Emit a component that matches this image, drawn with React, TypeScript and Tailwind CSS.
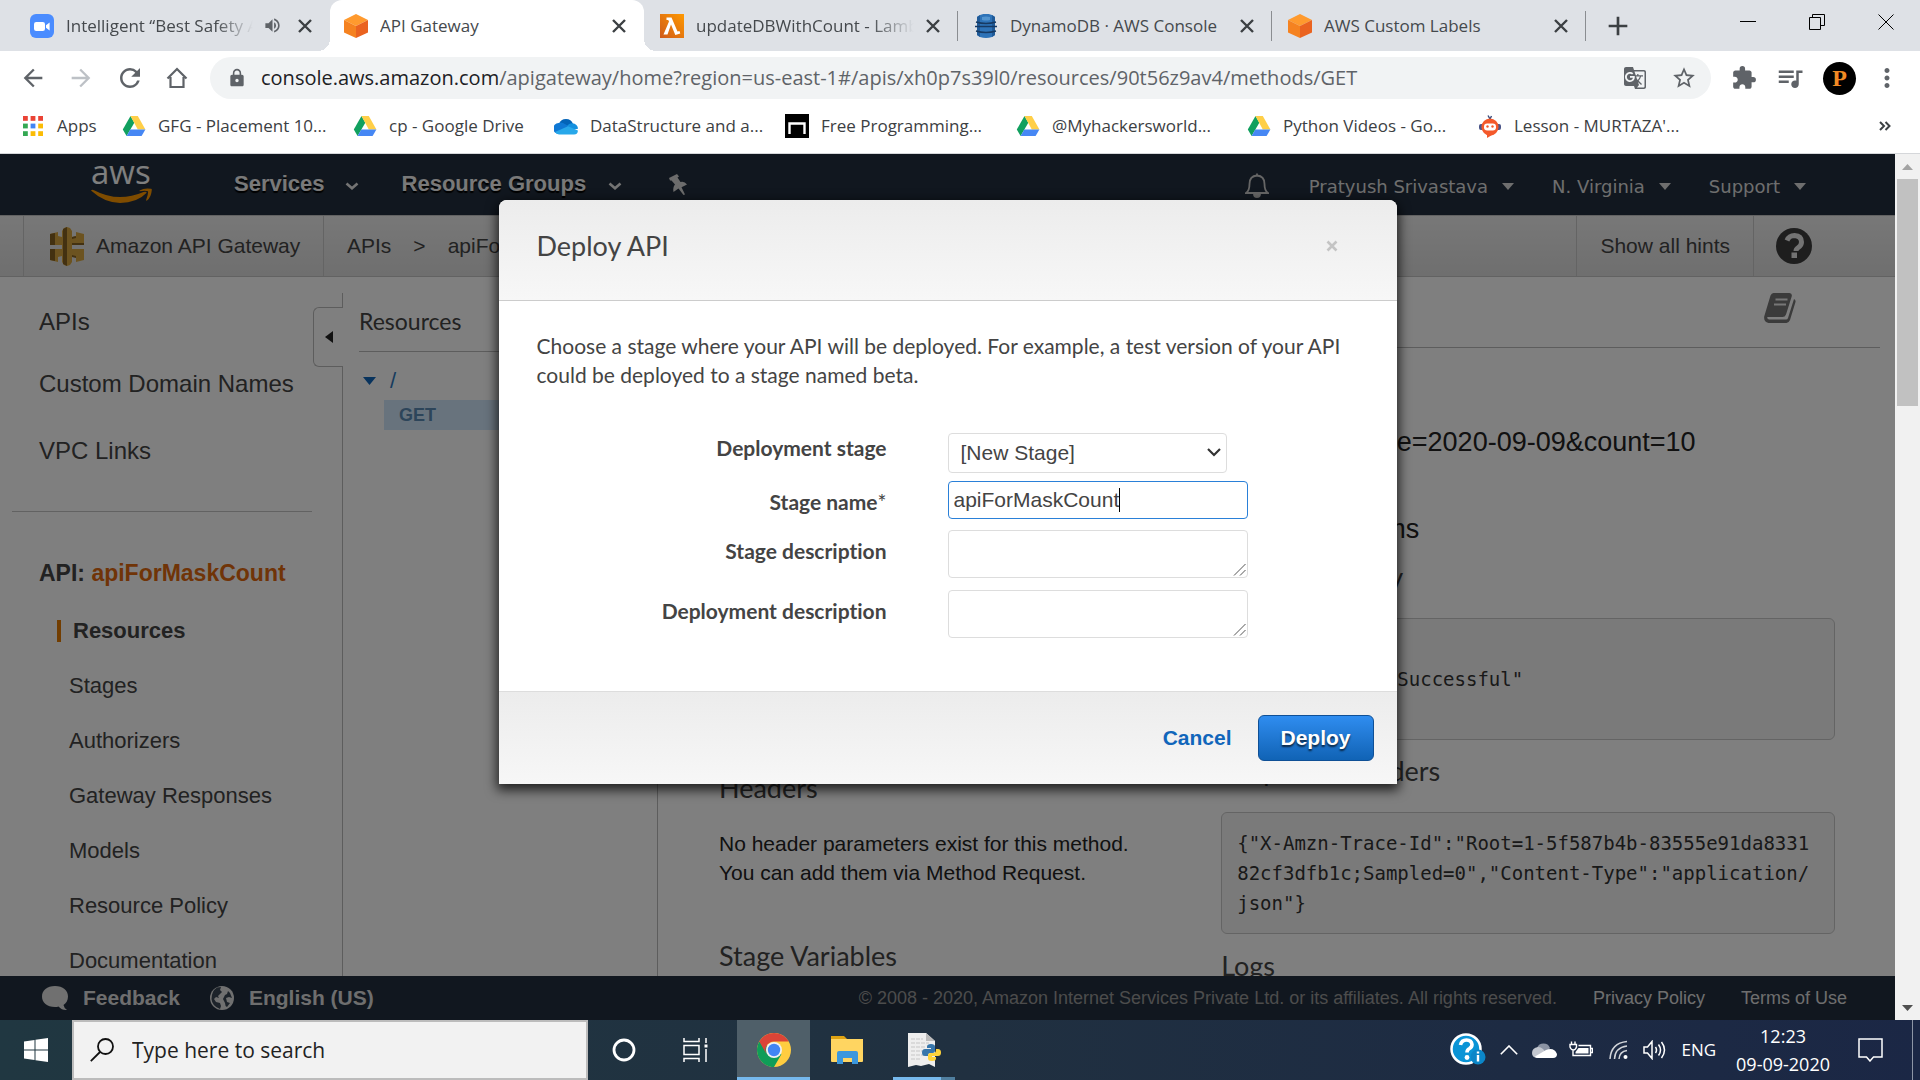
import React from "react";
import {
  MdAdd,
  MdArrowBack,
  MdArrowForward,
  MdExtension,
  MdGTranslate,
  MdLock,
  MdMoreVert,
  MdQueueMusic,
  MdRefresh,
  MdStarBorder,
  MdVolumeUp,
} from "react-icons/md";

const chromeFont = "font-['Open_Sans','Noto_Sans',sans-serif]";
const arial = "font-['Liberation_Sans',Arial,sans-serif]";
const lato = "font-['Lato',sans-serif] [font-variant-ligatures:none]";

/* ---------- favicons ---------- */

function ZoomIcon() {
  return (
    <svg viewBox="0 0 24 24" className="size-6 shrink-0">
      <rect width="24" height="24" rx="6" fill="#4a8cff" />
      <rect x="4" y="8" width="11" height="9" rx="2.2" fill="#fff" />
      <path d="M16 11.2 19.6 8.4v8.2L16 13.8z" fill="#fff" />
    </svg>
  );
}

function CubeIcon() {
  return (
    <svg viewBox="0 0 24 24" className="size-6 shrink-0">
      <path d="M12 0 24 6 12 12 0 6z" fill="#ff9a2e" />
      <path d="M0 6l12 6v12L0 18.500z" fill="#f58220" />
      <path d="M24 6l-12 6v12l12-5.500z" fill="#ea6320" />
    </svg>
  );
}

function LambdaIcon() {
  return (
    <svg viewBox="0 0 24 24" className="size-6 shrink-0">
      <defs>
        <linearGradient id="lam" x1="0" y1="1" x2="1" y2="0">
          <stop offset="0" stopColor="#cf5a1a" />
          <stop offset="1" stopColor="#f90" />
        </linearGradient>
      </defs>
      <rect width="24" height="24" fill="url(#lam)" />
      <path d="M6.500 3.500h5l6 14 2-.6.800 2.600-5 1.600L11 10.500 7.500 20.500H3.500L9 7.500 8.200 6H6.500z" fill="#fff" />
    </svg>
  );
}

function DynamoIcon() {
  return (
    <svg viewBox="0 0 24 24" className="size-6 shrink-0">
      <path d="M6 1Q12-1.500 18 1l3 2v18l-3 2q-6 2-12 0l-3-2V3z" fill="#2e73b8" />
      <path d="M3 3 6 1v22l-3-2zM21 3l-3-2v22l3-2z" fill="#205b99" />
      <path d="M2 8q10 3 20 0M1 12.500h22M2 17q10 3 20 0" stroke="#173a63" strokeWidth="1.400" fill="none" />
      <path d="M8 3q4-1.200 8 0v3q-4 1-8 0z" fill="#5294cf" />
    </svg>
  );
}

function DriveIcon() {
  return (
    <svg viewBox="0 0 24 24" className="size-6 shrink-0">
      <path d="M8.500 2 12.300 8.700 4.600 22 .800 15.500z" fill="#11a05f" />
      <path d="M8.500 2h7.300l7.600 13.500h-7.600z" fill="#ffcf48" />
      <path d="M8.300 15.500h15.100L19.600 22H4.600z" fill="#4687f4" />
    </svg>
  );
}

function OneDriveIcon() {
  return (
    <svg viewBox="0 0 24 24" className="size-6 shrink-0">
      <path d="M5 10a7.400 7.400 0 0 1 14 0L12 15z" fill="#0364b8" />
      <path d="M9 9 18 14 7 20H5A5.500 5.500 0 0 1 4.500 9 7 7 0 0 1 9 9z" fill="#0f78d4" />
      <path d="M18.500 9.300a5.500 5.500 0 0 1 5.500 5.500l-6 1-5-3.500a6 6 0 0 1 5.500-3z" fill="#1490df" />
      <path d="M1 18 14 12.300l9.900 4.200A4 4 0 0 1 20 20.500H5a5 5 0 0 1-4-2.500z" fill="#28a8ea" />
    </svg>
  );
}

function BlackSquareIcon() {
  return (
    <svg viewBox="0 0 24 24" className="size-6 shrink-0">
      <rect width="24" height="24" fill="#000" />
      <path d="M4.500 20V9.500h15V20" stroke="#fff" strokeWidth="2.400" fill="none" />
    </svg>
  );
}

function RobotIcon() {
  return (
    <svg viewBox="0 0 24 24" className="size-6 shrink-0">
      <path d="M10 1.500 12 5l1.500-3" stroke="#3b4a7a" strokeWidth="1.400" fill="none" />
      <rect x="1" y="10" width="22" height="6" rx="2" fill="#4a5588" />
      <circle cx="12" cy="13" r="8.600" fill="#f4592b" />
      <path d="M9 20v4l5-3z" fill="#f4592b" />
      <rect x="6" y="9.500" width="12" height="7" rx="3.200" fill="#fff" />
      <circle cx="9.500" cy="12.500" r="1.200" fill="#f4592b" />
      <circle cx="14.500" cy="12.500" r="1.200" fill="#f4592b" />
    </svg>
  );
}

function AppsIcon() {
  const colors = ["#ea4335", "#ea4335", "#ea4335", "#34a853", "#4285f4", "#fbbc05", "#34a853", "#fbbc05", "#fbbc05"];
  return (
    <svg viewBox="0 0 20 20" className="size-5 shrink-0">
      {colors.map((c, i) => (
        <rect key={i} x={(i % 3) * 7.6} y={Math.floor(i / 3) * 7.6} width="4.800" height="4.800" fill={c} />
      ))}
    </svg>
  );
}

/* ---------- browser chrome ---------- */

type TabData = { title: string; icon: React.ReactNode; active?: boolean; audio?: boolean; sep?: boolean };

const tabs: TabData[] = [
  { title: "Intelligent “Best Safety App", icon: <ZoomIcon />, audio: true },
  { title: "API Gateway", icon: <CubeIcon />, active: true },
  { title: "updateDBWithCount - Lambda", icon: <LambdaIcon />, sep: true },
  { title: "DynamoDB · AWS Console", icon: <DynamoIcon />, sep: true },
  { title: "AWS Custom Labels", icon: <CubeIcon />, sep: true },
];

function Tab({ tab }: { tab: TabData }) {
  return (
    <div
      className={
        tab.active
          ? "relative flex h-full w-[314px] items-center rounded-t-xl bg-white pr-3.5 pl-3.5 before:absolute before:bottom-0 before:-left-3 before:size-3 before:bg-[radial-gradient(circle_at_0_0,transparent_12px,white_12px)] after:absolute after:-right-3 after:bottom-0 after:size-3 after:bg-[radial-gradient(circle_at_100%_0,transparent_12px,white_12px)]"
          : tab.audio
            ? "relative flex h-full w-[314px] items-center pr-3.5 pl-3.5"
            : "relative flex h-full w-[314px] items-center pr-3.5 pl-4"
      }
    >
      {tab.icon}
      <button
        className={
          tab.active || tab.title.length < 24
            ? "ml-3 min-w-0 flex-1 overflow-hidden text-left text-[17px] leading-6 whitespace-nowrap text-[#45494d]"
            : "ml-3 min-w-0 flex-1 overflow-hidden [mask-image:linear-gradient(to_right,black_80%,transparent)] text-left text-[17px] leading-6 whitespace-nowrap text-[#45494d]"
        }
      >
        {tab.title}
      </button>
      {tab.audio && <MdVolumeUp className="mr-1 ml-2.5 size-[19px] shrink-0 text-[#5f6368]" />}
      <button aria-label={"Close " + tab.title} className="ml-2 shrink-0 text-[#3c4043]">
        <svg viewBox="0 0 22 22" className="size-[22px]" fill="none" stroke="currentColor" strokeWidth="2.400"><path d="M5 5l12 12M17 5 5 17" /></svg>
      </button>
      {tab.sep && <span className="absolute top-[11px] right-0 h-[30px] w-px bg-[#8a8d91]" />}
    </div>
  );
}

function TabStrip() {
  return (
    <div className="flex h-[51px] items-stretch bg-[#dee1e6] pl-4">
      {tabs.map((t) => (
        <Tab key={t.title} tab={t} />
      ))}
      <button aria-label="New tab" className="ml-4 text-[#3c4043]">
        <MdAdd className="size-8" />
      </button>
      <div className="ml-auto flex h-[43px] items-center gap-[53px] pr-[26px] text-black">
        <button aria-label="Minimize">
          <svg viewBox="0 0 16 16" className="size-4"><path d="M0 7.500h16" stroke="currentColor" strokeWidth="1" /></svg>
        </button>
        <button aria-label="Restore">
          <svg viewBox="0 0 16 16" className="size-4" fill="none" stroke="currentColor">
            <path d="M.5 3.500h11v12H.500zM3.500 3.500v-3h12v11h-4" />
          </svg>
        </button>
        <button aria-label="Close window">
          <svg viewBox="0 0 16 16" className="size-4" fill="none" stroke="currentColor"><path d="M.5.5l15 15M15.500.5l-15 15" /></svg>
        </button>
      </div>
    </div>
  );
}

function Toolbar() {
  return (
    <div className="flex h-[54px] items-center bg-white pr-[18px] pl-[19px] text-[#5f6368]">
      <div className="flex w-[191px] shrink-0 items-center gap-5">
        <button aria-label="Back"><MdArrowBack className="size-7" /></button>
        <button aria-label="Forward" className="text-[#bdc1c6]"><MdArrowForward className="size-7" /></button>
        <button aria-label="Reload"><MdRefresh className="size-[30px]" /></button>
        <button aria-label="Home">
          <svg viewBox="0 0 24 24" className="size-6" fill="none" stroke="currentColor" strokeWidth="2.200">
            <path d="M2.500 12.500 12 3l9.500 9.500M5.500 11v10h13V11" />
          </svg>
        </button>
      </div>
      <div className="flex h-[42px] min-w-0 flex-1 items-center rounded-full bg-[#f1f3f4] pr-3.5 pl-[17px]">
        <MdLock className="size-5 shrink-0" />
        <p className="ml-3.5 min-w-0 flex-1 overflow-hidden text-[20px] leading-7 whitespace-nowrap">
          <span className="text-[#202124]">console.aws.amazon.com</span>
          /apigateway/home?region=us-east-1#/apis/xh0p7s39l0/resources/90t56z9av4/methods/GET
        </p>
        <button aria-label="Translate"><MdGTranslate className="size-6" /></button>
        <button aria-label="Bookmark" className="ml-6"><MdStarBorder className="size-[26px]" /></button>
      </div>
      <div className="ml-5 flex items-center gap-[18px]">
        <button aria-label="Extensions"><MdExtension className="size-[26px]" /></button>
        <button aria-label="Media"><MdQueueMusic className="size-[30px]" /></button>
        <button aria-label="Profile" className="flex size-[33px] items-center justify-center rounded-full bg-black font-['Liberation_Serif',serif] text-2xl leading-none font-bold text-[#f08a24]">
          P
        </button>
        <button aria-label="Menu" className="-ml-0.5"><MdMoreVert className="size-[30px]" /></button>
      </div>
    </div>
  );
}

const bookmarks = [
  { label: "GFG - Placement 10...", icon: <DriveIcon />, narrow: false },
  { label: "cp - Google Drive", icon: <DriveIcon />, narrow: true },
  { label: "DataStructure and a...", icon: <OneDriveIcon />, narrow: false },
  { label: "Free Programming...", icon: <BlackSquareIcon />, narrow: false },
  { label: "@Myhackersworld...", icon: <DriveIcon />, narrow: false },
  { label: "Python Videos - Go...", icon: <DriveIcon />, narrow: false },
  { label: "Lesson - MURTAZA'...", icon: <RobotIcon />, narrow: false },
];

function BookmarksBar() {
  return (
    <nav className="flex h-[49px] items-center border-b border-[#d5d7da] bg-white pb-1.5 pl-[23px] text-[17px] leading-6 whitespace-nowrap text-[#3c4043]">
      <a href="#apps" className="flex w-[99px] items-center gap-3.5"><AppsIcon />Apps</a>
      {bookmarks.map((b) => (
        <a key={b.label} href="#bookmark" className={b.narrow ? "flex w-[201px] items-center gap-3" : "flex w-[231px] items-center gap-3"}>
          {b.icon}
          {b.label}
        </a>
      ))}
      <button aria-label="More bookmarks" className="ml-auto pr-[29px]">
        <svg viewBox="0 0 12 12" className="size-3" fill="none" stroke="#3c4043" strokeWidth="2"><path d="M1 2l4 4-4 4M6.500 2l4 4-4 4" /></svg>
      </button>
    </nav>
  );
}

/* ---------- AWS console ---------- */

function Chevron() {
  return (
    <svg viewBox="0 0 14 8" className="h-2 w-3.5" fill="none" stroke="#e8e8e8" strokeWidth="2.600"><path d="M1.500 1.500 7 6.200l5.500-4.700" /></svg>
  );
}

function Caret() {
  return <svg viewBox="0 0 12 7" className="h-[7px] w-3" fill="#ddd"><path d="M0 0h12L6 7z" /></svg>;
}

function AwsNav() {
  return (
    <header className="flex h-[61px] shrink-0 items-start bg-[#232f3e] pl-[91px] text-white">
      <a href="#home" className="flex w-[143px] flex-col pt-2">
        <span className="-mt-1.5 font-['Open_Sans','Noto_Sans',sans-serif] text-[33px] leading-8">aws</span>
        <svg viewBox="0 0 61 16" className="h-4 w-[61px]" fill="#f90">
          <path d="M0 2.500q1-1.500 3-.2Q27 15 52.500 4q2.800-1 3.200.800Q46 15 29 15 13 14.500 0 2.500z" />
          <path d="M48.500 2.500Q54-.500 60 .800 61 1 60.800 2q-.5 7-4.800 10.500-1.200.5-.8-.8Q57.500 6 57 3.200q-3-.8-8.300.1z" />
        </svg>
      </a>
      <button className={`${arial} flex h-[58px] items-center gap-5 text-[22px] font-bold text-[#f2f2f2] [text-shadow:0_2px_1px_#000]`}>
        Services <span className="pt-1.5"><Chevron /></span>
      </button>
      <button className={`${arial} ml-[43px] flex h-[58px] items-center gap-[22px] text-[22px] font-bold text-[#f2f2f2] [text-shadow:0_2px_1px_#000]`}>
        Resource Groups <span className="pt-1.5"><Chevron /></span>
      </button>
      <button aria-label="Pin" className="ml-[46px] pt-[19px]">
        <svg viewBox="0 0 20 22" className="h-[22px] w-5" fill="#d8d8d8">
          <path d="M1 5 9 1l2 2.500-1.500 1L12.500 9q4-1 6.500 2.500l-5.500 2.700 3.500 7.300-1.500.5-5-6.500-5 3.500Q4.500 14.500 7 11.500L3.500 7.500 2 7.500z" />
        </svg>
      </button>
      <div className="ml-auto flex h-16 items-center pr-[89px] font-['DejaVu_Sans',Verdana,sans-serif] text-[18px] text-[#ddd] [text-shadow:0_2px_1px_#000]">
        <button aria-label="Notifications" className="mr-10 -mt-0.5">
          <svg viewBox="0 0 24 26" className="h-[26px] w-6" fill="none" stroke="#ccc" strokeWidth="1.800">
            <path d="M12 1.500v2M1 21h22q-3.500-2-3.500-9 0-8-7.500-8.500Q4.500 4 4.500 12q0 7-3.500 9z" />
            <path d="M9 22a3 3 0 0 0 6 0z" fill="#ccc" />
          </svg>
        </button>
        <button className="flex items-center gap-3.5">Pratyush Srivastava <Caret /></button>
        <button className="ml-[38px] flex items-center gap-3.5">N. Virginia <Caret /></button>
        <button className="ml-[38px] flex items-center gap-3.5">Support <Caret /></button>
      </div>
    </header>
  );
}

function GatewayIcon() {
  return (
    <svg viewBox="0 0 34 39" className="h-[39px] w-[34px]">
      <path d="M0 7l8-2v4l4 1V4l2-3 3-1 3 1 2 3v6l4-1V5l8 2v11H22v4h12v11l-8 2v-5l-4-1v6l-2 3-3 1-3-1-2-3v-6l-4 1v5l-8-2V22h12v-4H0z" fill="#d9a741" />
      <path d="M17 0l-4 2v35l4 2zM0 7l5-1v12H0zM0 22h5v12l-5-1zM26 5v6l-4 1v-2l4-1zM22 16h12v2H22zM26 35v-6l-4-1v2l4 1z" fill="#876223" />
    </svg>
  );
}

function Breadcrumbs() {
  return (
    <div className={`${arial} flex h-[62px] shrink-0 items-stretch border-y border-[#c4c4c4] bg-linear-to-b from-[#f0f0f0] to-[#dedede] pl-[23px] text-[21px] text-[#444]`}>
      <a href="#gateway" className="flex w-[301px] items-center gap-3 border-x border-[#c8c8c8] pl-[26px]">
        <GatewayIcon />
        Amazon API Gateway
      </a>
      <nav className="flex items-center gap-[22px] pl-[23px]">
        <a href="#apis">APIs</a>
        <span>&gt;</span>
        <a href="#api">apiForMaskCount</a>
      </nav>
      <div className="ml-auto flex items-stretch">
        <button className="border-x border-[#c8c8c8] px-[23px]">Show all hints</button>
        <button aria-label="Help" className="pr-[83px] pl-[22px]">
          <svg viewBox="0 0 36 36" className="size-9">
            <circle cx="18" cy="18" r="18" fill="#3c3c3c" />
            <path d="M11 12.500Q13 7.500 18.500 7.500q7 .5 7 6.500 0 3.500-3.200 5.500-2.300 1.500-2.300 3.500" fill="none" stroke="#e6e6e6" strokeWidth="5" />
            <rect x="15.500" y="24.500" width="5.500" height="5.500" fill="#e6e6e6" />
          </svg>
        </button>
      </div>
    </div>
  );
}

const apiLinks = ["Stages", "Authorizers", "Gateway Responses", "Models", "Resource Policy", "Documentation"];

function Sidebar() {
  return (
    <aside className={`${arial} flex w-[343px] shrink-0 text-[#444]`}>
      <div className="min-w-0 flex-1 pl-3">
        <ul className="pl-[27px] text-[24px] leading-[30px] whitespace-nowrap">
          <li className="pt-[30px]"><a href="#apis">APIs</a></li>
          <li className="pt-8"><a href="#domains">Custom Domain Names</a></li>
          <li className="pt-[37px]"><a href="#vpc">VPC Links</a></li>
        </ul>
        <hr className="mt-[45px] mr-px border-[#c4c4c4]" />
        <h2 className="mt-[46px] pl-[27px] text-[23px] leading-[30px] font-bold whitespace-nowrap">
          API: <a href="#api" className="text-[#e0680f]">apiForMaskCount</a>
        </h2>
        <ul className="pt-[15px] text-[22px] leading-[55px] whitespace-nowrap">
          <li className="flex items-center pl-[45px] font-bold">
            <span className="mr-3 h-[22px] w-1 bg-[#e57a00]" />
            <a href="#resources">Resources</a>
          </li>
          {apiLinks.map((l) => (
            <li key={l} className="pl-[57px]"><a href="#section">{l}</a></li>
          ))}
        </ul>
      </div>
      <div className="flex w-[30px] flex-col pt-4">
        <div className="h-3.5 border-r border-[#bbb]" />
        <button aria-label="Collapse sidebar" className="flex h-[60px] items-center rounded-l-md border border-r-0 border-[#bbb] pl-[11px]">
          <svg viewBox="0 0 8 12" className="h-3 w-2" fill="#222"><path d="M8 0v12L0 6z" /></svg>
        </button>
        <div className="flex-1 border-r border-[#bbb]" />
      </div>
    </aside>
  );
}

function ResourceTree() {
  return (
    <section className="w-[315px] shrink-0 border-r border-[#bbb] pl-4">
      <h2 className={`${lato} mr-4 h-[75px] border-b border-[#bbb] pt-[31px] text-[23px] leading-[27px] text-[#444]`}>Resources</h2>
      <div className={`${arial} pt-[14px]`}>
        <button className="flex items-center gap-3.5 pl-1 text-[22px] leading-[30px] text-[#2f78bd]">
          <svg viewBox="0 0 13 8" className="h-2 w-[13px]" fill="#1166bb"><path d="M0 0h13L6.500 8z" /></svg>
          /
        </button>
        <button className="mt-1 ml-[25px] block h-[30px] w-[257px] bg-[#d1e6fa] pl-[15px] text-left text-[18px] font-bold text-[#5a8ab4]">GET</button>
      </div>
    </section>
  );
}

function BookIcon() {
  return (
    <svg viewBox="0 0 32 30" className="h-[30px] w-8">
      <path d="M9.500 0h16q3 .5 2.200 3.500L22 21.500q-1 2.500-3.500 2.500H3.500q-1 1.500 1.500 2.500h17q1.500 0 2-1.500L30 6q2 1 1.500 3l-5.500 18q-1 2.500-3.500 3H4.500Q-.5 29 .2 23.500L6.500 2.500Q7.500 0 9.500 0z" fill="#777" />
      <path d="M11.500 6.500h12M10 11.500h12" stroke="#eee" strokeWidth="2" />
    </svg>
  );
}

const leftSections = [
  { title: "Headers", lines: ["No header parameters exist for this method.", "You can add them via Method Request."] },
  { title: "Stage Variables", lines: [] },
];

const headingClass = "font-['Lato',sans-serif] text-[27px] leading-[34px] text-[#444]";
const codeClass =
  "rounded-md border border-[#c8c8c8] bg-[#f5f5f5] p-[15px] font-['DejaVu_Sans_Mono',monospace] text-[19px] leading-[30px] break-all whitespace-pre-wrap text-[#333]";

function MethodTest() {
  return (
    <main className={`${arial} min-w-0 flex-1`}>
      <div className="mr-[15px] ml-[15px] flex h-[71px] justify-end border-b border-[#bbb] pt-4 pr-[84px]">
        <a href="#docs" aria-label="Documentation"><BookIcon /></a>
      </div>
      <div className="grid grid-cols-[9fr_11fr] pr-[60px] pl-[61px]">
        <div className="pt-[423px]">
          {leftSections.map((s) => (
            <section key={s.title} className="pb-[52px]">
              <h3 className={headingClass}>{s.title}</h3>
              <p className="pt-6 text-[21px] leading-[29px] text-[#222]">
                {s.lines.map((l) => (
                  <span key={l} className="block">{l}</span>
                ))}
              </p>
            </section>
          ))}
        </div>
        <div className="pt-[73px]">
          <div className="text-[27px] leading-[42px] whitespace-nowrap text-[#222]">
            <p>Request: /?date=2020-09-09&amp;count=10</p>
            <p className="pt-[45px]">Latency: 342 ms</p>
          </div>
          <h3 className={`${headingClass} pt-2.5 pb-6`}>Response Body</h3>
          <pre className={codeClass}>{'{\n"Update count Successful"\n}'}</pre>
          <h3 className={`${headingClass} pt-3.5 pb-6`}>Response Headers</h3>
          <pre className={codeClass}>{'{"X-Amzn-Trace-Id":"Root=1-5f587b4b-83555e91da833182cf3dfb1c;Sampled=0","Content-Type":"application/json"}'}</pre>
          <h3 className={`${headingClass} pt-[15px] pb-6`}>Logs</h3>
        </div>
      </div>
    </main>
  );
}

function AwsFooter() {
  return (
    <footer className={`${arial} flex h-11 shrink-0 items-center bg-[#232f3e] pr-12 pl-[41px] whitespace-nowrap`}>
      <button className="flex items-center gap-3.5 text-[21px] font-bold text-[#ddd]">
        <svg viewBox="0 0 28 26" className="h-[26px] w-7" fill="#e0e0e0">
          <path d="M14 1c8 0 13 4.500 13 10.500 0 4-2 7-4.500 8.500q.5 3 3.500 5-5 .5-8.500-3.500-1.500.5-3.500.5C6 22 1 17.500 1 11.500S6 1 14 1z" />
        </svg>
        Feedback
      </button>
      <button className="ml-[29px] flex items-center gap-3.5 text-[21px] font-bold text-[#ddd]">
        <svg viewBox="0 0 26 26" className="size-[26px]">
          <circle cx="13" cy="13" r="12" fill="#e0e0e0" />
          <path d="M8 2.500 12 2l-1 3 2 2-4 4 1 2-3-1-2 2 2 3 4 1 1 3-1 3Q3 21 2.500 14 2.500 6 8 2.500zM19 6l2 2 2 5-3-1-3 1 1 4 3 1-3 4q-2-1-2-4l-2-4 2-4 2-1z" fill="#3a4654" />
        </svg>
        English (US)
      </button>
      <div className="ml-auto flex items-center gap-9 text-[18px] text-[#ddd]">
        <p className="text-[#999]">© 2008 - 2020, Amazon Internet Services Private Ltd. or its affiliates. All rights reserved.</p>
        <a href="#privacy">Privacy Policy</a>
        <a href="#terms">Terms of Use</a>
      </div>
    </footer>
  );
}

/* ---------- deploy dialog ---------- */

const labelClass = "w-[350px] shrink-0 text-right text-[21px] leading-[29px] font-bold text-[#444]";

function DescriptionField({ id, label }: { id: string; label: string }) {
  return (
    <div className="flex h-[60px] gap-[61px]">
      <label htmlFor={id} className={`${labelClass} pt-1.5`}>{label}</label>
      <div className="relative h-12 w-[300px]">
        <textarea id={id} className="size-full resize-none rounded border border-[#ddd]" />
        <svg viewBox="0 0 13 13" className="pointer-events-none absolute right-0.5 bottom-0.5 size-[13px]" fill="none" stroke="#555">
          <path d="M1 12.500 12.500 1M7 12.500 12.500 7" />
        </svg>
      </div>
    </div>
  );
}

function DeployDialog() {
  return (
    <div className="absolute inset-0 flex items-start justify-center bg-black/50 pt-[46px]">
      <div role="dialog" aria-labelledby="deploy-title" className={`${lato} w-[898px] rounded-t-lg bg-white text-[#444] shadow-[0_4px_12px_2px_rgba(0,0,0,0.75)]`}>
        <div className="flex h-[101px] items-center justify-between rounded-t-lg border-b border-[#ccc] bg-linear-to-b from-[#ececec] to-[#f7f7f7] pr-[59px] pb-2 pl-[38px]">
          <h1 id="deploy-title" className="text-[27px] leading-8">Deploy API</h1>
          <button aria-label="Close" className="text-[#c4c4c4]">
            <svg viewBox="0 0 12 12" className="size-3" stroke="currentColor" strokeWidth="2.600"><path d="M1.500 1.500l9 9M10.500 1.500l-9 9" /></svg>
          </button>
        </div>
        <div className="pt-[30px] pb-[41px]">
          <p className="pr-10 pl-[38px] text-[21px] leading-[29px]">
            Choose a stage where your API will be deployed. For example, a test version of your API could be deployed to a stage named beta.
          </p>
          <form className="mt-[44px] flex flex-col pl-[38px]">
            <div className="flex h-12 gap-[61px]">
              <label htmlFor="stage" className={labelClass}>Deployment stage</label>
              <div className="relative h-10 w-[279px]">
                <select id="stage" className={`${arial} size-full appearance-none rounded border border-[#ddd] bg-white pl-3 text-[21px] text-[#444]`}>
                  <option>[New Stage]</option>
                </select>
                <svg viewBox="0 0 14 9" className="pointer-events-none absolute top-[15px] right-1.5 h-[9px] w-3.5" fill="none" stroke="#333" strokeWidth="2.200"><path d="M1 1l6 6 6-6" /></svg>
              </div>
            </div>
            <div className="flex h-[49px] gap-[61px]">
              <label htmlFor="name" className={`${labelClass} pt-1.5`}>Stage name<span className="font-normal">*</span></label>
              <div className="flex h-[38px] w-[300px] items-center rounded border border-[#2a80d8] bg-white pl-[5px]">
                <input id="name" defaultValue="apiForMaskCount" className={`${arial} [field-sizing:content] text-[21px] text-[#444] outline-none`} />
                <span className="h-6 w-px bg-black" />
              </div>
            </div>
            <DescriptionField id="sdesc" label="Stage description" />
            <DescriptionField id="ddesc" label="Deployment description" />
          </form>
        </div>
        <div className={`${arial} flex h-[93px] items-center justify-end gap-[26px] border-t border-[#ddd] bg-linear-to-b from-[#ececec] to-[#f7f7f7] pr-[23px] text-[21px] font-bold`}>
          <button className="text-[#1166bb]">Cancel</button>
          <button className="h-[46px] w-[116px] rounded-md border border-[#0f5096] bg-linear-to-b from-[#2f8df0] to-[#1063b5] text-white [text-shadow:0_2px_2px_rgba(0,0,0,0.7)]">Deploy</button>
        </div>
      </div>
    </div>
  );
}

function Scrollbar() {
  return (
    <div className="flex w-[25px] shrink-0 flex-col items-center bg-[#f1f1f1]">
      <svg viewBox="0 0 11 6" className="mt-2.5 h-1.5 w-[11px]" fill="#a3a3a3"><path d="M0 6h11L5.500 0z" /></svg>
      <div className="mt-[9px] h-[227px] w-[21px] bg-[#c1c1c1]" />
      <svg viewBox="0 0 11 6" className="mt-auto mb-[9px] h-1.5 w-[11px]" fill="#505050"><path d="M0 0h11L5.500 6z" /></svg>
    </div>
  );
}

/* ---------- taskbar ---------- */

function ChromeLogo() {
  return (
    <svg viewBox="0 0 34 34" className="size-[34px]">
      <circle cx="17" cy="17" r="17" fill="#ffcd40" />
      <path d="M17 17 2.300 8.500A17 17 0 0 0 17 34l7.400-12.800z" fill="#0f9d58" />
      <path d="M2.300 8.500A17 17 0 0 1 31.700 8.500H17a8.500 8.500 0 0 0-7.400 12.700z" fill="#db4437" />
      <circle cx="17" cy="17" r="8" fill="#f1f1f1" />
      <circle cx="17" cy="17" r="6.200" fill="#4285f4" />
    </svg>
  );
}

function Taskbar() {
  return (
    <div className="flex h-[60px] shrink-0 items-stretch bg-linear-to-r from-[#203741] via-[#203040] to-[#1b2745] text-white">
      <button aria-label="Start" className="flex w-[72px] items-center justify-center">
        <svg viewBox="0 0 24 24" className="size-6" fill="#fff"><path d="M0 3.500 10.500 2v9.500H0zM11.500 1.800 24 0v11.500H11.500zM0 12.500h10.500V22L0 20.500zM11.500 12.500H24V24l-12.500-1.800z" /></svg>
      </button>
      <label className="flex w-[516px] items-center gap-[18px] border-2 border-[#bcbcbc] bg-[#f2f2f2] pt-0.5 pl-4">
        <svg viewBox="0 0 24 24" className="-mt-0.5 size-6" fill="none" stroke="#111" strokeWidth="1.800"><circle cx="15.500" cy="8.500" r="7.500" /><path d="M10 14 .8 23.200" /></svg>
        <input aria-label="Search" placeholder="Type here to search" className="min-w-0 flex-1 bg-transparent text-[21px] text-black outline-none placeholder:text-[#222]" />
      </label>
      <button aria-label="Cortana" className="flex w-[72px] items-center justify-center">
        <svg viewBox="0 0 24 24" className="size-6" fill="none" stroke="#fff" strokeWidth="2.800"><circle cx="12" cy="12" r="10" /></svg>
      </button>
      <button aria-label="Task view" className="flex w-[77px] items-center pl-[23px]">
        <svg viewBox="0 0 26 24" className="h-6 w-[26px]" fill="none" stroke="#fff" strokeWidth="1.500"><path d="M1 0v3.500h15V0M1 24v-3.500h15V24M1 7.500h15v9H1zM23 0v5M23 11v13" /><path d="M21.500 6.500h3v3h-3z" fill="#fff" stroke="none" /></svg>
      </button>
      <button aria-label="Chrome" className="flex w-[73px] items-center justify-center border-b-[3px] border-[#76b9ed] bg-[#4f5f69] pt-[3px]"><ChromeLogo /></button>
      <button aria-label="File Explorer" className="flex w-[83px] items-center pl-[21px]">
        <svg viewBox="0 0 33 28" className="h-7 w-[33px]">
          <path d="M0 0h13l3 3v4H0z" fill="#dfa312" />
          <path d="M0 3h32v22q0 1-1 1H1q-1 0-1-1z" fill="#ffd561" />
          <path d="M6 28V17q0-2 2-2h17q2 0 2 2v11h-6v-6H12v6z" fill="#3b97dd" />
        </svg>
      </button>
      <button aria-label="Python" className="flex w-12 items-center border-b-[3px] border-[#76b9ed] pt-[3px] pl-3.5">
        <svg viewBox="0 0 34 34" className="size-[34px] shrink-0">
          <path d="M1 0h18l9 8v26l-6-3-8 2-5-1-8 2z" fill="#eee" />
          <path d="M19 0v8h9z" fill="#bbb" />
          <path d="M4 6h12M4 10h18M4 14h14M4 18h12M4 22h13M4 26h10" stroke="#c5c5c5" strokeWidth="1.200" strokeDasharray="4 1" />
          <path d="M21 23h-3q-3 0-3-3.500t3-3.500h6v-1h-4v-1.500q0-2.500 4-2.500t4 2.500v4q0 2.500-2.500 2.500h-2q-2.500 0-2.500 3z" fill="#3776ab" />
          <path d="M29 16h2q3 0 3 3.500T31 23h-6v1h4v1.500q0 2.500-4 2.500t-4-2.500v-3q0-2.500 2.500-2.500h3q2.500 0 2.500-3z" fill="#ffd43b" />
        </svg>
      </button>
      <span className="w-3.5 border-b-[3px] border-[#507f9f]" />
      <div className="ml-auto flex items-center">
        <button aria-label="Help" className="mr-3.5">
          <svg viewBox="0 0 36 34" className="h-[34px] w-9">
            <circle cx="16" cy="16" r="14.500" fill="#0a94d6" stroke="#fff" strokeWidth="2.500" />
            <path d="M10.500 12q1-5 6-5t5.500 4.500q0 2.500-2.500 4-2.500 1.300-2.500 4" fill="none" stroke="#fff" strokeWidth="3.600" />
            <circle cx="17" cy="24.500" r="2.400" fill="#fff" />
            <circle cx="28" cy="24" r="7.500" fill="#0b86c8" />
            <path d="M28 22v6.500M28 18.500v2" stroke="#fff" strokeWidth="2.400" />
          </svg>
        </button>
        <svg viewBox="0 0 18 10" className="mr-3.5 h-2.5 w-[18px]" fill="none" stroke="#fff" strokeWidth="1.600"><path d="M.8 9.200 9 1l8.200 8.200" /></svg>
        <svg viewBox="0 0 25 16" className="mr-3 h-4 w-[25px]">
          <path d="M5 6a7 7 0 0 1 13 0L14 12z" fill="#8b93a3" />
          <path d="M0 11q0-5 6-6 3 0 5 2l6 7-11 2q-6 0-6-5z" fill="#c3c7cf" />
          <path d="M3 14.500 14 8q8-3 11 4 0 4-4 4H6q-2 0-3-1.500z" fill="#fff" />
        </svg>
        <svg viewBox="0 0 24 18" className="mr-4 h-[18px] w-6" fill="none" stroke="#fff" strokeWidth="1.400">
          <path d="M9.500 4.500h12v10H4V9.500M1 3.500h6.500v2.500q-1 3-3.200 3T1 6zM2.500.5v3M6 .5v3M22 7.500h1.500v4H22" />
          <path d="M9.500 7h10v5.500H6.500V11z" fill="#fff" stroke="none" />
        </svg>
        <svg viewBox="0 0 20 20" className="mr-3.5 size-5" fill="none" stroke="#fff" strokeWidth="1.500">
          <path d="M1 19Q2 3 18 1.500M5.500 19Q6 7.500 18 6M10 19q.5-7.500 8-8.500" opacity=".8" /><circle cx="16.500" cy="17" r="2" fill="#fff" stroke="none" />
        </svg>
        <svg viewBox="0 0 23 20" className="h-5 w-[23px]" fill="none" stroke="#fff" strokeWidth="1.500">
          <path d="M1 7h3.500L9 1.500v17L4.500 13H1zM12.500 7q2 3 0 6M15.500 4.500q4 5.500 0 11M18.500 2q6 8 0 16" />
        </svg>
        <span className="ml-[15px] text-[17px]">ENG</span>
        <div className="ml-5 text-center text-[18px] leading-[28px]">
          <p>12:23</p>
          <p>09-09-2020</p>
        </div>
        <button aria-label="Notifications" className="ml-7">
          <svg viewBox="0 0 25 24" className="mr-[29px] h-6 w-[25px]" fill="none" stroke="#fff" strokeWidth="1.500"><path d="M1 1h23v18h-8.500L12 23l-3.500-4H1z" /></svg>
        </button>
        <span className="mr-[7px] h-[60px] w-px bg-[#8d95a5]" />
      </div>
    </div>
  );
}

export default function App() {
  return (
    <div className={`${chromeFont} flex h-screen flex-col overflow-hidden`}>
      <TabStrip />
      <Toolbar />
      <BookmarksBar />
      <div className="flex min-h-0 flex-1">
        <div className="relative flex min-w-0 flex-1 flex-col bg-white">
          <AwsNav />
          <Breadcrumbs />
          <div className="flex min-h-0 flex-1 overflow-hidden">
            <Sidebar />
            <ResourceTree />
            <MethodTest />
          </div>
          <AwsFooter />
          <DeployDialog />
        </div>
        <Scrollbar />
      </div>
      <Taskbar />
    </div>
  );
}
